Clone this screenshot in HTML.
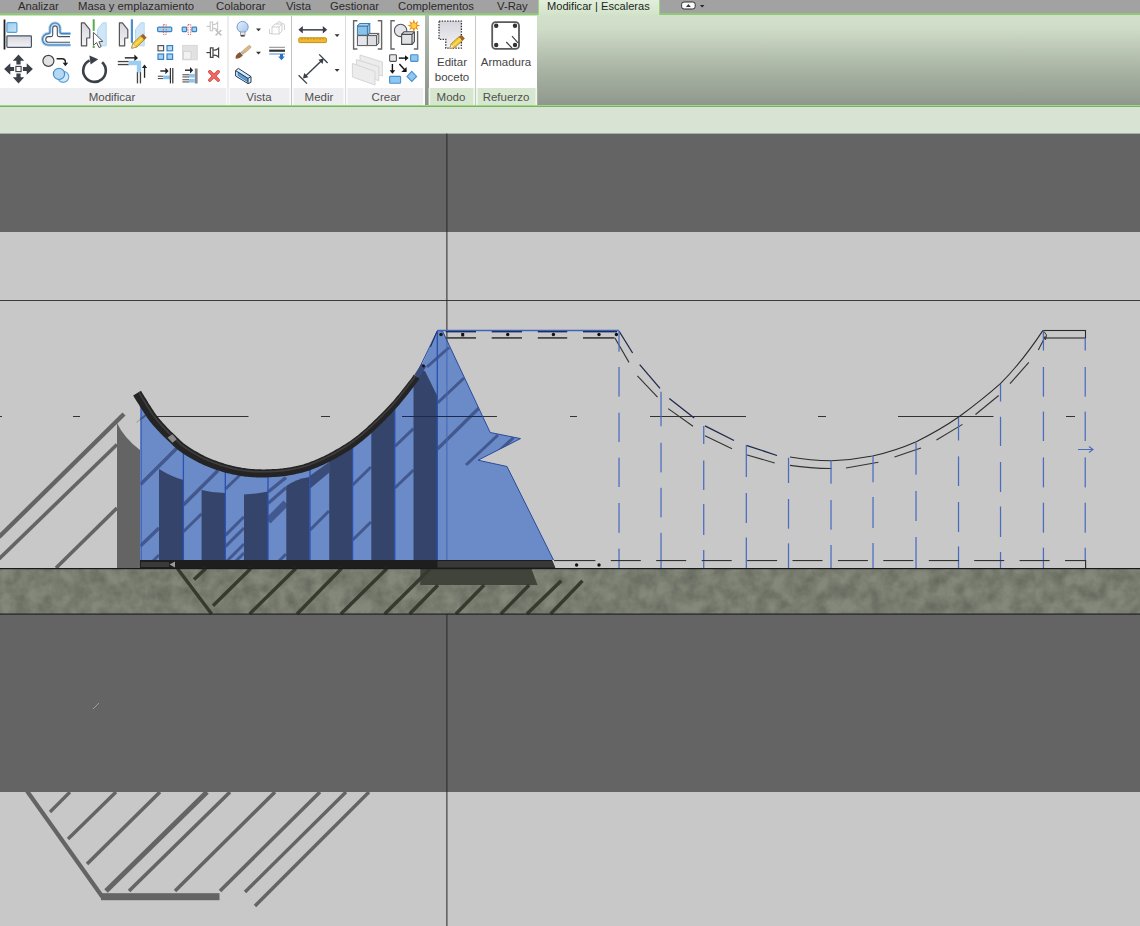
<!DOCTYPE html>
<html><head><meta charset="utf-8">
<style>
*{margin:0;padding:0;box-sizing:border-box}
html,body{width:1140px;height:926px;overflow:hidden;background:#c8c8c8;font-family:"Liberation Sans",sans-serif}
#tabs{position:absolute;left:0;top:0;width:1140px;height:15px;background:#a2a2a2;border-bottom:2px solid #8fc878}
#tabs span{position:absolute;top:-1.2px;font-size:11.3px;color:#2a2a2a;white-space:nowrap;line-height:14px}
#acttab{position:absolute;left:537.5px;top:0;width:122px;height:15px;background:#d5e4cd;border-left:1px solid #98d67c;border-right:1px solid #98d67c;background:linear-gradient(#e2eedc,#d3e3ca)}
#ribbon{position:absolute;left:0;top:15px;width:1140px;height:91px;background:linear-gradient(#d3e0cb 0,#cfdcc7 15%,#a9b4a4 60%,#8f978c 100%)}
#rwhite{position:absolute;left:0;top:0;width:425px;height:73px;background:#fff;border-top:1px solid #c9e4be}
#rlabel{position:absolute;left:0;top:73px;width:425px;height:17px;background:#eeeef0}
#rgreen{position:absolute;left:428.6px;top:0;width:108.6px;height:73px;background:#fff;border-top:1px solid #c9e4be}
#rsep{position:absolute;left:425px;top:0;width:3.6px;height:90px;background:linear-gradient(#b4bcb0,#8c928a)}
#rgreenl{position:absolute;left:428.6px;top:73px;width:108.6px;height:17px;background:#d6e6cf}
.plabel{position:absolute;top:75px;font-size:11.5px;color:#505050;text-align:center;line-height:14px}
.sep{position:absolute;top:0;width:1px;height:90px;background:#d0d0d0}
.btxt{position:absolute;font-size:11.5px;color:#454545;text-align:center;line-height:14.7px}
#rline{position:absolute;left:0;top:105px;width:1140px;height:2.4px;background:linear-gradient(#b2dc9e 0,#9ad082 40%,#74b65c 75%,#8cc476 100%)}
#opt{position:absolute;left:0;top:107px;width:1140px;height:27px;background:#d9e3d3}
#draw{position:absolute;left:0;top:133px;width:1140px;height:793px}
#icons{position:absolute;left:0;top:15px}
</style></head><body>
<div id="tabs">
<span style="left:18px">Analizar</span>
<span style="left:78px">Masa y emplazamiento</span>
<span style="left:216px">Colaborar</span>
<span style="left:286px">Vista</span>
<span style="left:330px">Gestionar</span>
<span style="left:398px">Complementos</span>
<span style="left:497px">V-Ray</span>
<div id="acttab"></div>
<span style="left:547px;color:#1c261c;font-size:11.1px">Modificar | Escaleras</span>
</div>
<div id="ribbon">
<div id="rwhite"></div><div id="rsep"></div><div id="rlabel"></div><div id="rgreen"></div><div id="rgreenl"></div>
<div class="plabel" style="left:62px;width:100px">Modificar</div>
<div class="plabel" style="left:229px;width:60px">Vista</div>
<div class="plabel" style="left:289px;width:60px">Medir</div>
<div class="plabel" style="left:346px;width:80px">Crear</div>
<div class="plabel" style="left:428px;width:46px">Modo</div>
<div class="plabel" style="left:476px;width:60px">Refuerzo</div>
<div class="btxt" style="left:430px;top:40px;width:44px">Editar<br>boceto</div>
<div class="btxt" style="left:476px;top:40px;width:60px">Armadura</div>
</div>
<div id="rline"></div>
<div id="opt"></div>
<svg id="icons" width="1140" height="107" viewBox="0 0 1140 107" style="position:absolute;left:0;top:0">
<defs>
<linearGradient id="gGray" x1="0" y1="0" x2="0" y2="1"><stop offset="0" stop-color="#d4d4dc"/><stop offset="1" stop-color="#f4f4f6"/></linearGradient>
<linearGradient id="gBlue" x1="0" y1="0" x2="1" y2="1"><stop offset="0" stop-color="#9ccdf0"/><stop offset="1" stop-color="#c4e4f8"/></linearGradient>
<linearGradient id="gBulb" x1="0" y1="0" x2="1" y2="1"><stop offset="0" stop-color="#e4f0fc"/><stop offset="1" stop-color="#a4c4ec"/></linearGradient>
</defs>
<!-- align -->
<rect x="3.6" y="19.5" width="1.8" height="30" fill="#222"/>
<rect x="6.9" y="22.7" width="10" height="9.6" rx="1" fill="url(#gBlue)" stroke="#5a9fd4" stroke-width="1.2"/>
<rect x="6.9" y="35.8" width="24.5" height="11.5" rx="0.8" fill="url(#gGray)" stroke="#4a5468" stroke-width="1.2"/>
<!-- offset -->
<path d="M70.5 33.6 H62 Q60 33.6 60 31.5 V28 A5 5 0 0 0 50 28 V31.5 Q50 33.6 48 33.6 H48.2 A5.7 5.7 0 0 0 48.2 45 H70.5" fill="none" stroke="#9ccbee" stroke-width="3"/>
<path d="M70.5 33.6 H62 Q60 33.6 60 31.5 V28 A5 5 0 0 0 50 28 V31.5 Q50 33.6 48 33.6 H48.2 A5.7 5.7 0 0 0 48.2 45 H70.5" fill="none" stroke="#4a7fb4" stroke-width="1.1"/>
<path d="M70 36.6 H59 Q57.3 36.6 57.3 35 V28.2 A2.3 2.3 0 0 0 52.7 28.2 V35 Q52.7 36.6 51 36.6 H48.6 A2.8 2.8 0 0 0 48.6 42.3 H70" fill="none" stroke="#4a4f58" stroke-width="1.1"/>
<!-- move -->
<g fill="#3a3f48">
<path d="M18.5 54.6 L24.2 60.8 H20.6 V64.6 H16.4 V60.8 H12.8 Z"/>
<path d="M18.5 83.4 L24.2 77.2 H20.6 V73.4 H16.4 V77.2 H12.8 Z"/>
<path d="M4.1 69 L10.3 63.3 V66.9 H14.1 V71.1 H10.3 V74.7 Z"/>
<path d="M32.9 69 L26.7 63.3 V66.9 H22.9 V71.1 H26.7 V74.7 Z"/>
</g>
<rect x="15.9" y="66.4" width="5.2" height="5.2" fill="#fff" stroke="#3a3f48" stroke-width="1.1"/>
<!-- copy -->
<circle cx="63.2" cy="76.8" r="5.6" fill="#cfe8fa" stroke="#62a6dc" stroke-width="1.1"/>
<circle cx="59" cy="73.9" r="5.6" fill="#b4d8f2" stroke="#4a8fca" stroke-width="1.2"/>
<circle cx="48.4" cy="60.9" r="5.5" fill="#e2e2e6" stroke="#454545" stroke-width="1.2"/>
<path d="M56.6 58.7 H62 Q65.4 58.7 65.4 62 V64" fill="none" stroke="#222" stroke-width="1.4"/>
<path d="M62.6 62.8 H68.2 L65.4 66.2 Z" fill="#222"/>
<!-- mirror pick -->
<path d="M81.4 22.8 H84.4 L89.8 29.6 V38 H86.7 V45.8 H81.4 Z" fill="url(#gGray)" stroke="#555" stroke-width="1.2" stroke-linejoin="round"/>
<path d="M106.2 22.8 H102.8 L97.5 29.6 V45.8 H106.2 Z" fill="#cfe6f8" stroke="#b4d6f0" stroke-width="1"/>
<rect x="92.7" y="19.3" width="2" height="11.5" fill="#5aaa50"/>
<rect x="92.7" y="46" width="2" height="2" fill="#5aaa50"/>
<path d="M93.4 32.3 V45.4 L96.6 42.6 L99 47.6 L101.2 46.6 L98.9 41.8 L102.9 41.4 Z" fill="#fff" stroke="#555" stroke-width="1" stroke-linejoin="round"/>
<!-- mirror draw -->
<path d="M119.4 22.8 H122.4 L127.8 29.6 V38 H124.7 V45.8 H119.4 Z" fill="url(#gGray)" stroke="#555" stroke-width="1.2" stroke-linejoin="round"/>
<path d="M144.2 22.8 H140.8 L135.5 29.6 V45.8 H144.2 Z" fill="#cfe6f8" stroke="#b4d6f0" stroke-width="1"/>
<rect x="130.8" y="19.3" width="2.2" height="23.5" fill="#4a90d0"/>
<g transform="translate(131.6,48.2) rotate(-43.5)">
<path d="M0 0 L4.4 -2.7 H15 V2.7 H4.4 Z" fill="#f2c62e" stroke="#a07818" stroke-width="0.7"/>
<path d="M0 0 L4.4 -2.7 V2.7 Z" fill="#f4e4c4" stroke="#a07818" stroke-width="0.5"/>
<rect x="15" y="-2.7" width="3.2" height="5.4" fill="#a0602a"/>
<rect x="4" y="-0.6" width="11" height="1.2" fill="#f8e070"/>
</g>
<!-- rotate -->
<path d="M102.1 62.2 A11.3 11.3 0 1 1 89.6 60.4" fill="none" stroke="#3a3f48" stroke-width="2.6"/>
<path d="M89.4 55.6 L98.2 59.2 L90.6 64.4 Z" fill="#3a3f48"/>
<!-- trim corner -->
<rect x="124.8" y="57.1" width="10.5" height="1.5" fill="#333"/>
<path d="M134.4 54.6 L138 57.9 L134.4 61.2 Z" fill="#222"/>
<rect x="117.8" y="60.9" width="11" height="1.3" fill="#444"/><rect x="117.8" y="63.9" width="11" height="1.3" fill="#444"/>
<path d="M128.6 60.8 H141.2 V72.4 H136.8 V65.2 H128.6 Z" fill="#9ccdf2"/>
<rect x="136.8" y="72.2" width="1.3" height="11.2" fill="#444"/><rect x="139.8" y="72.2" width="1.3" height="11.2" fill="#444"/>
<rect x="143.9" y="67" width="1.3" height="10.8" fill="#222"/>
<path d="M141.9 68 L144.5 64.4 L147.1 68 Z" fill="#222"/>
<!-- split -->
<rect x="157.6" y="27.2" width="14.2" height="4.4" rx="1" fill="#a4d2f2" stroke="#3a82c4" stroke-width="1.2"/>
<rect x="163.4" y="24.6" width="2.8" height="9.8" fill="none" stroke="#e05050" stroke-width="0.9" stroke-dasharray="1.4 1"/>
<rect x="182.2" y="27.2" width="4.4" height="4.4" rx="0.8" fill="#a4d2f2" stroke="#3a82c4" stroke-width="1.2"/>
<rect x="192" y="27.2" width="4.6" height="4.4" rx="0.8" fill="#a4d2f2" stroke="#3a82c4" stroke-width="1.2"/>
<rect x="188" y="24.6" width="2.8" height="9.8" fill="none" stroke="#e05050" stroke-width="0.9" stroke-dasharray="1.4 1"/>
<!-- unpin (gray) -->
<g fill="none" stroke="#c8c8c8" stroke-width="1.1">
<path d="M206.6 26.4 H210.2 M210.2 22 H212.6 V30.8 H210.2 Z M212.6 24 Q215 25.6 217.6 22.4 V30.4 Q215 27.4 212.6 28.8"/>
<path d="M215.6 30 L221.4 35.4 M221.4 30 L215.6 35.4" stroke="#c0c0c0" stroke-width="1.5"/>
</g>
<!-- array -->
<rect x="158" y="45.6" width="5.6" height="5.2" fill="#f4f4f4" stroke="#555" stroke-width="1.2"/>
<rect x="167" y="45.6" width="5.6" height="5.2" fill="#b4dcf6" stroke="#3a82c4" stroke-width="1.2"/>
<rect x="158" y="54" width="5.6" height="5.4" fill="#a4d2f2" stroke="#3a82c4" stroke-width="1.2"/>
<rect x="167" y="54" width="5.6" height="5.4" fill="#a4d2f2" stroke="#3a82c4" stroke-width="1.2"/>
<!-- scale (gray) -->
<rect x="182.6" y="45.4" width="14.6" height="14.4" fill="#e2e2e2" stroke="#d8d8d8" stroke-width="1"/>
<rect x="183.4" y="51.6" width="7.6" height="7.6" fill="#f2f2f2" stroke="#d0d0d0" stroke-width="0.8"/>
<!-- pin -->
<g fill="none" stroke="#444" stroke-width="1.2">
<path d="M206.4 52.6 H210.4"/>
<path d="M210.4 47.8 H213 V57.4 H210.4 Z"/>
<path d="M213 49.8 Q215.6 51 218.6 48.2 V57 Q215.6 54.2 213 55.4"/>
</g>
<!-- trim single -->
<rect x="160.3" y="70.3" width="6" height="1.4" fill="#222"/><path d="M165.4 67.8 L168.6 71 L165.4 74.2 Z" fill="#222"/>
<rect x="157.8" y="75.7" width="5.6" height="1.1" fill="#555"/><rect x="157.8" y="78" width="5.6" height="1.1" fill="#555"/>
<rect x="163.4" y="75.6" width="6.6" height="3.6" fill="#8cc4f0"/>
<rect x="169.8" y="68" width="1.2" height="15.4" fill="#333"/><rect x="172.2" y="68" width="1.2" height="15.4" fill="#333"/>
<!-- trim multiple -->
<rect x="185" y="69.5" width="6" height="1.4" fill="#222"/><path d="M190 67 L193.2 70.2 L190 73.4 Z" fill="#222"/>
<rect x="194.8" y="68.5" width="2.8" height="15" fill="#888"/>
<rect x="182.4" y="74.2" width="6.6" height="1.1" fill="#555"/><rect x="182.4" y="76.4" width="6.6" height="1.1" fill="#555"/>
<rect x="182.4" y="79.2" width="6.6" height="1.1" fill="#555"/><rect x="182.4" y="81.4" width="6.6" height="1.1" fill="#555"/>
<rect x="189" y="74" width="5.8" height="3.6" fill="#8cc4f0"/><rect x="189" y="79" width="5.8" height="3.6" fill="#8cc4f0"/>
<!-- delete -->
<path d="M209.8 71.7 L218.2 80.1 M218.2 71.7 L209.8 80.1" stroke="#c43c3c" stroke-width="3.4" stroke-linecap="round"/>
<path d="M209.8 71.7 L218.2 80.1 M218.2 71.7 L209.8 80.1" stroke="#f46a62" stroke-width="2.1" stroke-linecap="round"/>
<!-- separators -->
<rect x="227.5" y="16" width="1" height="89" fill="#dcdcdc"/>
<rect x="291" y="16" width="1" height="89" fill="#c4c4c4"/>
<rect x="345" y="16" width="1" height="89" fill="#dcdcdc"/>
<rect x="475" y="16" width="1" height="89" fill="#c4ccc0"/>
<g fill="#fbfbfb"><rect x="226" y="88" width="1.5" height="17"/><rect x="228.5" y="88" width="1.5" height="17"/><rect x="289.5" y="88" width="1.5" height="17"/><rect x="292" y="88" width="1.5" height="17"/><rect x="343.5" y="88" width="1.5" height="17"/><rect x="346" y="88" width="1.5" height="17"/><rect x="423" y="88" width="2" height="17"/></g><rect x="428.6" y="88" width="1.6" height="17" fill="#eef5ea"/><rect x="473.2" y="88" width="1.8" height="17" fill="#eef5ea"/><rect x="476" y="88" width="1.8" height="17" fill="#eef5ea"/><rect x="535.4" y="88" width="1.8" height="17" fill="#eef5ea"/>
<!-- Vista -->
<circle cx="242.6" cy="27" r="5.6" fill="url(#gBulb)" stroke="#7a9cd0" stroke-width="1"/>
<rect x="240.4" y="32" width="4.6" height="3.2" fill="#e8e8ec" stroke="#889" stroke-width="0.7"/>
<rect x="240.8" y="35" width="3.8" height="1.6" fill="#444"/>
<path d="M256 28.4 H261 L258.5 31.2 Z" fill="#333"/>
<g fill="none" stroke="#cfcfcf" stroke-width="1"><rect x="272" y="27" width="7" height="7"/><path d="M272 27 L275 24 H282 V31 L279 34 M279 27 L282 24 M269.5 29 V33.5 H272 M276 24 L279 21.5 L284.4 24.4 V30"/></g>
<g transform="translate(235.6,58.6) rotate(-40)">
<path d="M0 0 Q2 -3.4 7.6 -2.2 V2.2 Q3 3 0 0 Z" fill="#8a5630"/>
<rect x="7.6" y="-1.8" width="2.2" height="3.6" fill="#b0b4bc"/>
<rect x="9.8" y="-1.5" width="9.6" height="3" rx="1.2" fill="#dcb888" stroke="#b08850" stroke-width="0.5"/>
</g>
<path d="M256 51.8 H261 L258.5 54.6 Z" fill="#333"/>
<rect x="269.2" y="46.8" width="15.8" height="1" fill="#8a8a8a"/>
<rect x="269.2" y="49.6" width="15.8" height="2.2" fill="#333"/>
<rect x="269.2" y="53.4" width="15.8" height="1.2" fill="#6aa0dc" />
<path d="M280 54 H283 V56.6 H284.8 L281.5 60.2 L278.2 56.6 H280 Z" fill="#2a72c4"/>
<g stroke="#2c3a4c" stroke-width="1" stroke-linejoin="round"><path d="M235.6 70.6 L238.4 68.4 L251 76.6 V82.4 L248 83.6 L235.6 76 Z" fill="#d4ecfc"/><path d="M238.2 72.4 L247.6 78.4 V81.6 L238.2 75.6 Z" fill="#58a4e4" stroke="#2a6cb0" stroke-width="0.8"/><path d="M235.6 70.6 L248 78.4 V83.6 M248 78.4 L251 76.6" fill="none"/></g>
<!-- Medir -->
<rect x="301" y="29.1" width="24" height="1.5" fill="#3a3f48"/>
<path d="M298.4 29.8 L302.8 26 V33.6 Z M327.2 29.8 L322.8 26 V33.6 Z" fill="#3a3f48"/>
<rect x="298.8" y="37.8" width="27.6" height="4.8" rx="0.8" fill="#f2b92e" stroke="#c48e1c" stroke-width="1"/>
<path d="M302 38 V40 M305 38 V39.4 M308 38 V40 M311 38 V39.4 M314 38 V40 M317 38 V39.4 M320 38 V40 M323 38 V39.4" stroke="#b07c10" stroke-width="0.7"/>
<path d="M334.6 34.2 H339.6 L337.1 37 Z" fill="#333"/>
<path d="M304 77.6 L322.8 59.4" stroke="#3a3f48" stroke-width="1.4"/>
<path d="M298.6 75.2 L307 83.6 M319.2 54.4 L327.6 63" stroke="#3a3f48" stroke-width="1.3"/>
<path d="M323.6 58.6 L322.6 64 L318.4 59.8 Z M303 78.4 L304.2 73 L308.4 77.2 Z" fill="#3a3f48"/>
<path d="M334.6 69 H339.6 L337.1 71.8 Z" fill="#333"/>
<!-- Crear: [cubes] -->
<g fill="none" stroke="#666" stroke-width="1.4"><path d="M357.4 20.8 H353.6 V49 H357.4"/><path d="M377.8 20.8 H381.6 V49 H377.8"/><path d="M394.8 20.8 H391 V49 H394.8"/><path d="M413.8 49 H417.6 V31"/></g>
<g stroke-linejoin="round" stroke-width="1">
<path d="M357.4 26 L359.6 23.6 H369.8 V32.6 L367.4 35.2 H357.4 Z" fill="#8cc2e8" stroke="#3a78b0"/>
<path d="M357.4 26 H367.4 L369.8 23.6 M367.4 26 V35.2" fill="none" stroke="#3a78b0"/>
<path d="M357.4 26 L359.6 23.6 H369.8 L367.4 26 Z" fill="#b8dcf4" stroke="#3a78b0"/>
<path d="M357.4 35.6 H367.4 V45.6 H357.4 Z" fill="#e4e6ea" stroke="#555"/>
<path d="M367.4 35.6 L369.6 33.4 H378.8 V43 L376.6 45.6 H367.4 Z" fill="#dcdee2" stroke="#555"/>
<path d="M367.4 35.6 H376.6 L378.8 33.4 M376.6 35.6 V45.6" fill="none" stroke="#555"/>
</g>
<!-- [circle cube star] -->
<circle cx="400.6" cy="30.4" r="6.2" fill="#e4e4ec" stroke="#555" stroke-width="1.1"/>
<g stroke-linejoin="round" stroke="#4a4a4a" stroke-width="1.1">
<path d="M401.6 34.4 L404 31.8 H414.4 V41.6 L412 44.4 H401.6 Z" fill="#e0e2e6"/>
<path d="M401.6 34.4 H412 L414.4 31.8 M412 34.4 V44.4" fill="none"/>
</g>
<g transform="translate(413.8,25.6)">
<path d="M0 -6.4 L1.4 -2.6 L4.6 -4.6 L3 -1.2 L6.6 0 L3 1.2 L4.6 4.6 L1.4 2.6 L0 6.4 L-1.4 2.6 L-4.6 4.6 L-3 1.2 L-6.6 0 L-3 -1.2 L-4.6 -4.6 L-1.4 -2.6 Z" fill="#ee8c1c"/>
<circle r="2.6" fill="#fcd040"/>
</g>
<!-- gray panels -->
<g fill="#ececec" stroke="#d6d6d6" stroke-width="1" stroke-linejoin="round">
<path d="M360 55 L382.4 62 V76 L360 69 Z"/>
<path d="M356.4 59.6 L378.8 66.6 V80.6 L356.4 73.6 Z"/>
<path d="M352.4 63.4 L375 71.4 V85 L352.4 77 Z"/>
</g>
<!-- flow -->
<rect x="389.6" y="54.8" width="6.8" height="6.6" rx="0.8" fill="#e2e4ea" stroke="#555" stroke-width="1.1"/>
<rect x="410.6" y="54.8" width="7.4" height="6.6" rx="0.8" fill="#8cc8f0" stroke="#4a90cc" stroke-width="1.1"/>
<rect x="398.8" y="57.4" width="7" height="1.4" fill="#111"/><path d="M405 55.2 L408.6 58.1 L405 61 Z" fill="#111"/>
<rect x="391.7" y="64" width="1.4" height="7" fill="#111"/><path d="M389.6 70.2 L392.4 73.8 L395.2 70.2 Z" fill="#111"/>
<path d="M399.4 64 L404.4 69.4" stroke="#111" stroke-width="1.4"/><path d="M406.6 67 V72 H401.4 Z" fill="#111"/>
<rect x="389.6" y="76.4" width="11" height="6.8" rx="0.8" fill="#8cc8f0" stroke="#4a90cc" stroke-width="1.1"/>
<path d="M411.8 71.4 L416.6 76.4 L411.8 81.4 L407 76.4 Z" fill="#8cc8f0" stroke="#4a90cc" stroke-width="1.1"/>
<!-- Edit sketch -->
<path d="M439 21.2 H461.4 V48.2 H445.8 V39.4 H439 Z" fill="url(#gGray)" stroke="#333" stroke-width="1.3" stroke-dasharray="1.4 1.3"/>
<g transform="translate(449.8,48.4) rotate(-41.5)">
<path d="M0 0 L4.4 -2.6 H14.6 V2.6 H4.4 Z" fill="#f2c62e" stroke="#a07818" stroke-width="0.7"/>
<path d="M0 0 L4.4 -2.6 V2.6 Z" fill="#f8ecd4" stroke="#a07818" stroke-width="0.5"/>
<rect x="14.6" y="-2.6" width="3.2" height="5.2" fill="#a0602a"/>
<rect x="4" y="-0.6" width="10.6" height="1.2" fill="#f8e070"/>
</g>
<!-- Armadura -->
<rect x="492.2" y="22.2" width="26.8" height="26.6" rx="3.4" fill="#fff" stroke="#5a5a5a" stroke-width="1.8"/>
<circle cx="496.2" cy="25.8" r="2.2" fill="#333"/><circle cx="515" cy="25.8" r="2.2" fill="#333"/><circle cx="496.2" cy="45" r="2.2" fill="#333"/><circle cx="515" cy="45" r="2.2" fill="#333"/>
<path d="M512 36.2 L518 42.8 M506.2 42 L512 48" stroke="#444" stroke-width="1.2"/>
<!-- minimise widget -->
<rect x="681.6" y="2" width="13.6" height="7" rx="2.4" fill="#fafafa" stroke="#333" stroke-width="1"/>
<path d="M686 7 L688.4 4 L690.8 7 Z" fill="#333"/>
<path d="M700 5 H704.4 L702.2 7.6 Z" fill="#222"/>
</svg>

<svg id="draw" width="1140" height="793" viewBox="0 133 1140 793">
<rect x="0" y="133.6" width="1140" height="98.4" fill="#646464"/>
<rect x="0" y="232" width="1140" height="337" fill="#c8c8c8"/>
<rect x="0" y="614" width="1140" height="178" fill="#646464"/>
<rect x="0" y="792" width="1140" height="134" fill="#c8c8c8"/>
<rect x="0" y="300" width="1140" height="1" fill="#3a3a3a"/>
<rect x="446.4" y="133.6" width="1" height="793" fill="#262626"/>
<path d="M117 568 L117 423 Q124 438 140 450 L140 568 Z" fill="#646464"/>
<g stroke="#646464" stroke-linecap="butt" fill="none"><path d="M-2 637 L123 414" transform="" stroke-width="0"/>
<line x1="-1" y1="537" x2="124" y2="414" stroke-width="4.4"/><line x1="-1" y1="559" x2="117" y2="444.5" stroke-width="3.6"/><line x1="56" y1="568" x2="117" y2="508" stroke-width="3.6"/></g>
<rect x="0" y="416" width="2" height="1" fill="#333"/>
<rect x="73" y="416" width="7" height="1" fill="#333"/>
<rect x="152" y="416" width="96.5" height="1" fill="#333"/>
<rect x="321" y="416" width="9" height="1" fill="#333"/>
<rect x="402" y="416" width="95" height="1" fill="#333"/>
<rect x="570" y="416" width="7" height="1" fill="#333"/>
<rect x="650" y="416" width="96" height="1" fill="#333"/>
<rect x="818" y="416" width="8" height="1" fill="#333"/>
<rect x="898" y="416" width="95.5" height="1" fill="#333"/>
<rect x="1066" y="416" width="9" height="1" fill="#333"/>
<defs><clipPath id="bclip"><path d="M140.4 402 C142.3 404.4 148.0 411.8 151.8 416.4 C155.6 421.0 159.6 425.8 163 429.5 C166.4 433.2 169.0 435.6 172.4 438.8 C175.8 442.0 178.3 445.0 183.4 448.5 C188.5 452.0 196.1 456.7 203 460 C209.9 463.3 218.0 466.1 225 468.2 C232.0 470.3 238.8 471.5 245 472.4 C251.2 473.3 256.2 473.4 262 473.4 C267.8 473.4 274.5 473.1 280 472.6 C285.5 472.1 290.1 471.4 295 470.3 C299.9 469.2 303.8 468.4 309.5 466.3 C315.2 464.2 322.4 461.2 329.5 457.5 C336.6 453.8 345.4 448.7 352.3 443.9 C359.2 439.1 364.0 434.9 371 428.5 C378.0 422.1 387.2 413.0 394.2 405.2 C401.2 397.4 409.5 386.3 413.2 381.5 C416.9 376.7 415.9 377.3 416.5 376.5 L437.5 330.5 L442.5 331 L490.2 432.5 L520.5 438.6 L478 460.2 L507 466.5 L553.5 560 L140.4 560 Z"/></clipPath></defs>
<path d="M140.4 402 C142.3 404.4 148.0 411.8 151.8 416.4 C155.6 421.0 159.6 425.8 163 429.5 C166.4 433.2 169.0 435.6 172.4 438.8 C175.8 442.0 178.3 445.0 183.4 448.5 C188.5 452.0 196.1 456.7 203 460 C209.9 463.3 218.0 466.1 225 468.2 C232.0 470.3 238.8 471.5 245 472.4 C251.2 473.3 256.2 473.4 262 473.4 C267.8 473.4 274.5 473.1 280 472.6 C285.5 472.1 290.1 471.4 295 470.3 C299.9 469.2 303.8 468.4 309.5 466.3 C315.2 464.2 322.4 461.2 329.5 457.5 C336.6 453.8 345.4 448.7 352.3 443.9 C359.2 439.1 364.0 434.9 371 428.5 C378.0 422.1 387.2 413.0 394.2 405.2 C401.2 397.4 409.5 386.3 413.2 381.5 C416.9 376.7 415.9 377.3 416.5 376.5 L437.5 330.5 L442.5 331 L490.2 432.5 L520.5 438.6 L478 460.2 L507 466.5 L553.5 560 L140.4 560 Z" fill="#6a8bc8"/>
<g clip-path="url(#bclip)">
<line x1="140.4" y1="484.5" x2="177.5" y2="447.5" stroke="#42588e" stroke-width="3.5"/>
<line x1="140.4" y1="546" x2="159" y2="528" stroke="#42588e" stroke-width="3.5"/>
<line x1="153" y1="561" x2="159" y2="555" stroke="#42588e" stroke-width="3"/>
<line x1="183.4" y1="505" x2="218" y2="470.6" stroke="#42588e" stroke-width="3.5"/>
<line x1="183.4" y1="531.7" x2="201.6" y2="513.8" stroke="#42588e" stroke-width="3"/>
<line x1="225.4" y1="489" x2="240" y2="475" stroke="#42588e" stroke-width="3"/>
<line x1="225.4" y1="535.4" x2="244" y2="516.8" stroke="#42588e" stroke-width="3"/>
<line x1="225.4" y1="546.6" x2="244" y2="528" stroke="#42588e" stroke-width="3"/>
<line x1="227" y1="561" x2="244" y2="544" stroke="#42588e" stroke-width="3"/>
<line x1="236" y1="561" x2="244" y2="553" stroke="#42588e" stroke-width="3"/>
<line x1="268" y1="492" x2="286" y2="477.5" stroke="#42588e" stroke-width="3.5"/>
<line x1="268" y1="503.5" x2="286.3" y2="487.5" stroke="#42588e" stroke-width="3"/>
<line x1="268" y1="521" x2="286" y2="503" stroke="#42588e" stroke-width="7"/>
<line x1="279" y1="561" x2="286" y2="554" stroke="#42588e" stroke-width="3"/>
<line x1="310" y1="530" x2="329" y2="511" stroke="#42588e" stroke-width="3"/>
<line x1="352.6" y1="485" x2="371" y2="467" stroke="#42588e" stroke-width="3"/>
<line x1="352.6" y1="540" x2="371" y2="522" stroke="#42588e" stroke-width="3"/>
<line x1="394.8" y1="446.5" x2="413.5" y2="428.6" stroke="#42588e" stroke-width="3"/>
<line x1="394.8" y1="488" x2="413.5" y2="470" stroke="#42588e" stroke-width="3"/>
<line x1="427" y1="367" x2="449" y2="347.5" stroke="#42588e" stroke-width="3"/>
<line x1="437.5" y1="403" x2="464" y2="378" stroke="#42588e" stroke-width="3"/>
<line x1="437.5" y1="449" x2="479" y2="408" stroke="#42588e" stroke-width="3.2"/>
<line x1="466" y1="465" x2="498" y2="435" stroke="#42588e" stroke-width="3"/>
<line x1="488" y1="461" x2="513.5" y2="437.7" stroke="#42588e" stroke-width="3"/>
<path d="M159 560 L159 469 Q172 477 183.4 480 L183.4 560 Z" fill="#35446a"/>
<path d="M201.6 560 L201.6 490 Q213 493 225 493 L225 560 Z" fill="#35446a"/>
<path d="M244 560 L244 494.4 Q256 494 268 491.4 L268 560 Z" fill="#35446a"/>
<path d="M286.3 560 L286.3 486 Q296 479 309.6 477 L309.6 560 Z" fill="#35446a"/>
<path d="M309.6 476 L329.3 462 L329.3 472.5 L309.6 489 Z" fill="#3c4c78"/>
<rect x="329.2" y="380" width="23.4" height="180" fill="#35446a"/>
<rect x="371.3" y="380" width="23.5" height="180" fill="#35446a"/>
<path d="M413.5 560 L413.5 370 L425 371 L437.3 396 L437.3 560 Z" fill="#35446a"/>
<line x1="140.9" y1="330" x2="140.9" y2="560" stroke="#2a50b0" stroke-width="1.3"/>
<line x1="183.4" y1="330" x2="183.4" y2="560" stroke="#2a50b0" stroke-width="1.3"/>
<line x1="225.3" y1="330" x2="225.3" y2="560" stroke="#2a50b0" stroke-width="1.3"/>
<line x1="268" y1="330" x2="268" y2="560" stroke="#2a50b0" stroke-width="1.3"/>
<line x1="310" y1="330" x2="310" y2="560" stroke="#2a50b0" stroke-width="1.3"/>
<line x1="352.6" y1="330" x2="352.6" y2="560" stroke="#2a50b0" stroke-width="1.3"/>
<line x1="394.8" y1="330" x2="394.8" y2="560" stroke="#2a50b0" stroke-width="1.3"/>
<line x1="437.3" y1="330" x2="437.3" y2="560" stroke="#2a50b0" stroke-width="1.3"/>
<line x1="446.9" y1="330" x2="446.9" y2="560" stroke="#4466b0" stroke-width="1"/>
<rect x="402" y="416" width="95" height="1" fill="#1c2a50"/>
</g>
<path d="M416 375 L437.5 330.5 L442.5 331 L490.2 432.5 L520.5 438.6 L478 460.2 L507 466.5 L553.5 560" fill="none" stroke="#2c4a9c" stroke-width="1"/>
<line x1="136.6" y1="422.4" x2="140.4" y2="419.4" stroke="#8a8a94" stroke-width="0.9"/><line x1="140.4" y1="419.4" x2="146" y2="415" stroke="#42588e" stroke-width="2"/>
<polygon points="133.2,395.6 133.9,396.8 134.8,398.2 135.9,400.0 137.1,402.0 138.5,404.1 139.9,406.4 141.3,408.7 142.8,411.0 144.2,413.2 145.6,415.3 146.9,417.3 148.1,419.0 149.2,420.6 150.3,422.0 151.4,423.3 152.4,424.5 153.4,425.7 154.4,426.8 155.3,427.8 156.2,428.8 157.1,429.8 158.0,430.7 158.9,431.6 159.7,432.5 160.6,433.4 161.4,434.3 162.3,435.2 163.1,436.0 163.8,436.8 164.6,437.5 165.4,438.3 166.2,439.0 167.0,439.7 167.8,440.5 168.6,441.2 169.4,442.0 170.2,442.8 171.0,443.5 171.8,444.3 172.6,445.1 173.4,445.9 174.3,446.7 175.2,447.5 176.2,448.4 177.3,449.3 178.4,450.2 179.6,451.1 180.9,452.0 182.3,453.0 183.8,453.9 185.3,454.9 186.9,456.0 188.6,457.0 190.3,458.0 192.1,459.1 193.9,460.1 195.7,461.1 197.5,462.0 199.4,463.0 201.2,463.8 203.0,464.7 204.9,465.5 206.8,466.3 208.7,467.1 210.6,467.8 212.5,468.5 214.4,469.2 216.4,469.9 218.3,470.5 220.2,471.1 222.0,471.7 223.8,472.2 225.6,472.7 227.4,473.2 229.2,473.6 231.0,474.1 232.7,474.4 234.5,474.8 236.2,475.1 237.9,475.4 239.6,475.7 241.2,476.0 242.8,476.2 244.4,476.5 246.0,476.7 247.6,476.8 249.1,477.0 250.5,477.1 252.0,477.2 253.4,477.3 254.8,477.3 256.3,477.4 257.7,477.4 259.1,477.4 260.5,477.4 262.0,477.4 263.5,477.4 265.0,477.4 266.6,477.4 268.2,477.3 269.7,477.3 271.3,477.2 272.9,477.1 274.4,477.0 276.0,476.9 277.5,476.8 278.9,476.7 280.4,476.5 281.8,476.4 283.1,476.3 284.5,476.1 285.8,475.9 287.0,475.7 288.3,475.5 289.6,475.3 290.8,475.1 292.1,474.9 293.3,474.6 294.6,474.4 295.8,474.1 297.0,473.8 298.2,473.6 299.4,473.3 300.6,473.0 301.7,472.7 302.9,472.4 304.1,472.1 305.4,471.7 306.7,471.3 308.0,470.9 309.4,470.4 310.8,469.9 312.3,469.3 313.9,468.7 315.5,468.1 317.1,467.4 318.8,466.7 320.5,466.0 322.2,465.2 324.0,464.4 325.8,463.6 327.6,462.7 329.4,461.8 331.2,460.8 333.1,459.8 335.0,458.8 336.9,457.7 338.9,456.6 340.9,455.5 342.9,454.3 344.9,453.1 346.9,451.9 348.8,450.7 350.7,449.4 352.6,448.2 354.4,446.9 356.1,445.7 357.8,444.5 359.4,443.3 360.9,442.1 362.4,440.9 364.0,439.6 365.5,438.3 367.0,437.0 368.5,435.7 370.1,434.2 371.7,432.7 373.5,431.2 375.3,429.5 377.1,427.7 379.1,425.8 381.1,423.9 383.1,421.9 385.1,419.9 387.1,417.8 389.2,415.8 391.2,413.7 393.1,411.6 395.0,409.6 396.8,407.6 398.7,405.5 400.5,403.3 402.3,401.1 404.2,398.8 406.0,396.6 407.7,394.4 409.4,392.2 411.0,390.2 412.4,388.2 413.8,386.5 414.9,384.9 415.9,383.6 416.8,382.5 417.5,381.6 418.0,380.8 418.5,380.2 418.8,379.6 419.1,379.1 419.3,378.7 419.4,378.3 419.5,378.1 419.5,378.1 419.4,378.3 419.4,378.3 413.6,374.7 413.4,375.1 413.2,375.5 413.0,375.8 413.0,375.9 413.0,375.9 413.0,375.9 412.9,376.1 412.7,376.4 412.4,376.8 411.9,377.5 411.3,378.3 410.5,379.4 409.4,380.7 408.2,382.3 406.9,384.0 405.4,385.9 403.8,387.9 402.2,390.0 400.5,392.2 398.7,394.4 396.9,396.6 395.1,398.8 393.3,400.9 391.6,402.8 389.8,404.8 387.9,406.8 386.0,408.8 384.1,410.8 382.1,412.8 380.1,414.8 378.0,416.8 376.1,418.8 374.1,420.6 372.2,422.5 370.3,424.2 368.5,425.8 366.9,427.4 365.2,428.9 363.7,430.2 362.2,431.5 360.7,432.8 359.3,434.0 357.9,435.2 356.4,436.3 354.9,437.4 353.4,438.6 351.8,439.7 350.2,440.9 348.5,442.1 346.7,443.2 344.8,444.4 342.9,445.6 341.0,446.8 339.1,447.9 337.1,449.0 335.2,450.1 333.3,451.2 331.4,452.2 329.5,453.2 327.8,454.2 326.0,455.1 324.3,455.9 322.6,456.7 320.8,457.5 319.2,458.3 317.5,459.0 315.8,459.7 314.2,460.4 312.6,461.0 311.1,461.6 309.6,462.2 308.2,462.7 306.8,463.2 305.6,463.6 304.3,464.0 303.2,464.4 302.1,464.7 301.0,465.0 299.9,465.2 298.8,465.5 297.7,465.8 296.6,466.0 295.4,466.2 294.2,466.5 293.0,466.7 291.8,467.0 290.6,467.2 289.5,467.4 288.3,467.6 287.1,467.8 285.9,467.9 284.7,468.1 283.5,468.3 282.2,468.4 280.9,468.5 279.6,468.7 278.3,468.8 276.9,468.9 275.4,469.0 273.9,469.1 272.5,469.1 270.9,469.2 269.4,469.3 267.9,469.3 266.4,469.3 264.9,469.4 263.5,469.4 262.0,469.4 260.6,469.3 259.2,469.3 257.8,469.3 256.5,469.3 255.2,469.2 253.8,469.1 252.5,469.1 251.2,469.0 249.8,468.8 248.4,468.7 247.0,468.5 245.6,468.3 244.1,468.1 242.5,467.9 240.9,467.6 239.4,467.3 237.8,467.0 236.1,466.7 234.5,466.3 232.9,466.0 231.2,465.6 229.5,465.1 227.9,464.7 226.2,464.2 224.5,463.7 222.7,463.1 220.9,462.5 219.1,461.9 217.3,461.3 215.4,460.6 213.6,459.9 211.8,459.2 210.0,458.5 208.2,457.7 206.5,456.9 204.8,456.2 203.2,455.3 201.5,454.5 199.8,453.6 198.1,452.6 196.4,451.6 194.7,450.7 193.1,449.7 191.5,448.7 190.0,447.7 188.5,446.8 187.1,445.8 185.9,445.0 184.7,444.1 183.7,443.4 182.8,442.6 181.9,441.8 181.0,441.1 180.2,440.3 179.5,439.6 178.7,438.8 177.9,438.0 177.1,437.2 176.3,436.4 175.4,435.6 174.6,434.8 173.8,434.1 173.0,433.3 172.3,432.6 171.5,431.9 170.8,431.2 170.1,430.5 169.4,429.7 168.6,429.0 167.9,428.2 167.1,427.4 166.3,426.5 165.4,425.5 164.5,424.6 163.7,423.7 162.8,422.7 162.0,421.8 161.1,420.8 160.2,419.8 159.3,418.8 158.4,417.6 157.5,416.4 156.5,415.2 155.5,413.8 154.4,412.2 153.2,410.3 151.8,408.3 150.5,406.1 149.0,403.9 147.6,401.6 146.3,399.3 144.9,397.2 143.7,395.2 142.6,393.4 141.7,391.9 141.0,390.8" fill="#242424"/>
<polyline points="138.7,392.2 139.4,393.4 140.3,394.9 141.4,396.6 142.6,398.6 143.9,400.8 145.3,403.0 146.7,405.3 148.2,407.6 149.6,409.8 150.9,411.8 152.2,413.7 153.3,415.4 154.3,416.8 155.3,418.1 156.3,419.3 157.2,420.5 158.2,421.6 159.1,422.6 160.0,423.6 160.8,424.6 161.7,425.5 162.6,426.4 163.4,427.4 164.3,428.3 165.1,429.2 165.9,430.0 166.7,430.8 167.5,431.6 168.2,432.4 168.9,433.1 169.7,433.8 170.4,434.5 171.2,435.3 172.0,436.0 172.8,436.7 173.6,437.5 174.4,438.3 175.3,439.1 176.1,439.9 176.9,440.7 177.6,441.5 178.5,442.2 179.3,443.0 180.2,443.8 181.1,444.6 182.1,445.4 183.2,446.2 184.4,447.1 185.7,448.0 187.1,448.9 188.6,449.9 190.1,450.9 191.7,451.9 193.4,452.9 195.1,453.9 196.8,454.9 198.5,455.8 200.3,456.7 202.0,457.6 203.7,458.5 205.5,459.3 207.2,460.0 209.0,460.8 210.9,461.6 212.7,462.3 214.6,463.0 216.4,463.6 218.3,464.3 220.1,464.9 221.9,465.5 223.7,466.1 225.5,466.6 227.2,467.1 228.9,467.6 230.6,468.0 232.3,468.4 234.0,468.8 235.6,469.1 237.3,469.5 238.9,469.8 240.5,470.0 242.1,470.3 243.7,470.5 245.2,470.8 246.7,471.0 248.2,471.1 249.6,471.3 251.0,471.4 252.3,471.5 253.7,471.6 255.1,471.6 256.4,471.7 257.8,471.7 259.2,471.8 260.6,471.8 262.0,471.8 263.5,471.8 265.0,471.8 266.5,471.8 268.0,471.7 269.5,471.7 271.1,471.6 272.6,471.5 274.1,471.5 275.6,471.4 277.0,471.3 278.5,471.1 279.9,471.0 281.2,470.9 282.5,470.8 283.8,470.6 285.0,470.4 286.3,470.3 287.5,470.1 288.7,469.9 289.9,469.7 291.1,469.5 292.3,469.3 293.5,469.0 294.7,468.8 295.9,468.5 297.0,468.3 298.2,468.0 299.3,467.8 300.4,467.5 301.5,467.2 302.7,466.9 303.8,466.6 305.0,466.2 306.3,465.8 307.6,465.4 309.0,464.9 310.4,464.3 311.9,463.7 313.5,463.1 315.1,462.5 316.7,461.8 318.4,461.1 320.1,460.4 321.8,459.6 323.5,458.8 325.3,457.9 327.0,457.1 328.8,456.2 330.6,455.2 332.5,454.2 334.4,453.2 336.3,452.1 338.3,451.0 340.2,449.8 342.2,448.7 344.1,447.5 346.0,446.3 347.9,445.1 349.7,443.9 351.5,442.7 353.1,441.5 354.7,440.3 356.3,439.2 357.8,438.0 359.2,436.9 360.7,435.7 362.2,434.5 363.6,433.2 365.1,431.9 366.7,430.5 368.3,429.0 370.0,427.4 371.8,425.8 373.7,424.0 375.6,422.2 377.6,420.3 379.6,418.4 381.6,416.4 383.6,414.3 385.6,412.3 387.6,410.3 389.5,408.2 391.4,406.2 393.1,404.3 394.9,402.3 396.7,400.1 398.5,398.0 400.3,395.8 402.1,393.5 403.8,391.3 405.5,389.2 407.1,387.2 408.5,385.3 409.9,383.5 411.1,382.0 412.1,380.7 412.9,379.6 413.6,378.7 414.1,378.0 414.4,377.5 414.7,377.1 414.8,376.9 414.9,376.7 414.9,376.6 415.0,376.5 415.1,376.3 415.2,376.0 415.3,375.8" fill="none" stroke="#3e3e3e" stroke-width="1.6"/>
<path d="M416.5 376.5 L424 365" stroke="#3a4c7c" stroke-width="5.5" fill="none"/>
<circle cx="423.5" cy="366" r="1.4" fill="#151515"/>
<path d="M167.5 437.5 l5 -3.2 l4.2 5 l-4.2 3.4 z" fill="#8a8a8a"/>
<path d="M140 560 L552 560 L555.5 568.5 L140 568.5 Z" fill="#1e1e1e"/>
<path d="M437.5 561 L552.4 561 L555 567.6 L437.5 567.6 Z" fill="#383838"/>
<rect x="141" y="562" width="28" height="5" fill="#3a3a3a"/>
<path d="M169.5 564.5 L175 561.5 L175 567.5 Z" fill="#9a9a9a"/>
<line x1="437.5" y1="330.5" x2="619" y2="330.5" stroke="#3c64c0" stroke-width="1.6"/>
<rect x="445.7" y="331" width="30.30000000000001" height="1.4" fill="#1e2c58"/>
<rect x="445.7" y="337" width="30.30000000000001" height="1.8" fill="#4a4a4a"/>
<rect x="491.7" y="331" width="30.30000000000001" height="1.4" fill="#1e2c58"/>
<rect x="491.7" y="337" width="30.30000000000001" height="1.8" fill="#4a4a4a"/>
<rect x="537.8" y="331" width="29.40000000000009" height="1.4" fill="#1e2c58"/>
<rect x="537.8" y="337" width="29.40000000000009" height="1.8" fill="#4a4a4a"/>
<rect x="583" y="331" width="34" height="1.4" fill="#1e2c58"/>
<rect x="583" y="337" width="31.5" height="1.8" fill="#4a4a4a"/>
<rect x="461.2" y="333" width="3" height="3.4" fill="#111"/>
<circle cx="507.7" cy="334.5" r="1.7" fill="#111"/>
<circle cx="553.4" cy="334.5" r="1.7" fill="#111"/>
<circle cx="599" cy="334.5" r="1.7" fill="#111"/>
<circle cx="616.4" cy="334.5" r="1.7" fill="#111"/>
<circle cx="441" cy="334.5" r="1.8" fill="#1a1a1a"/><line x1="437" y1="331.5" x2="430.5" y2="347" stroke="#1c2c5c" stroke-width="1"/>
<line x1="619" y1="331" x2="632.6" y2="353" stroke="#1e2a4a" stroke-width="1.3"/>
<line x1="639.7" y1="364.7" x2="660" y2="388.4" stroke="#1e2a4a" stroke-width="1.3"/>
<line x1="669.3" y1="398.4" x2="694.2" y2="418" stroke="#1e2a4a" stroke-width="1.3"/>
<line x1="705" y1="425.8" x2="734" y2="440.5" stroke="#1e2a4a" stroke-width="1.3"/>
<line x1="746.3" y1="445.3" x2="777" y2="455.5" stroke="#1e2a4a" stroke-width="1.3"/>
<line x1="614.9" y1="338" x2="629" y2="362.4" stroke="#333" stroke-width="1.1"/>
<line x1="637.4" y1="375.9" x2="657.5" y2="397.2" stroke="#333" stroke-width="1.1"/>
<line x1="668.2" y1="408.6" x2="693" y2="426.3" stroke="#333" stroke-width="1.1"/>
<line x1="705" y1="435.8" x2="732" y2="448.8" stroke="#333" stroke-width="1.1"/>
<line x1="746.3" y1="454.7" x2="774.7" y2="463" stroke="#333" stroke-width="1.1"/>
<path d="M790 457 Q810 460.5 831.6 460.7 Q852 460 872.5 456 Q895 451 916.3 441.7 Q940 430 959 416.8 Q982 400 1000.4 383.7 Q1022 362 1043 330.4" fill="none" stroke="#2a2a2a" stroke-width="1.1"/>
<path d="M790 465.4 Q810 468.5 831.6 468.5" fill="none" stroke="#333" stroke-width="1.1"/>
<line x1="846" y1="468" x2="878.4" y2="462.3" stroke="#333" stroke-width="1.1"/>
<line x1="894.5" y1="457" x2="921" y2="448" stroke="#333" stroke-width="1.1"/>
<line x1="936.5" y1="440" x2="962.5" y2="424.4" stroke="#333" stroke-width="1.1"/>
<line x1="975.5" y1="414.5" x2="998.7" y2="395.5" stroke="#333" stroke-width="1.1"/>
<line x1="1010" y1="383.7" x2="1028.8" y2="362.4" stroke="#333" stroke-width="1.1"/>
<line x1="1038.3" y1="350" x2="1045.4" y2="336.3" stroke="#333" stroke-width="1.1"/>
<rect x="1043.5" y="330.5" width="42" height="7.5" fill="none" stroke="#2a2a2a" stroke-width="1.1"/>
<path d="M1044 331.5 L1046.5 335 L1045.5 340" fill="none" stroke="#333" stroke-width="1"/>
<rect x="618.4" y="331" width="1.25" height="20.7" fill="#4a6cc0"/>
<rect x="618.4" y="367" width="1.25" height="29.6" fill="#4a6cc0"/>
<rect x="618.4" y="412.7" width="1.25" height="29.3" fill="#4a6cc0"/>
<rect x="618.4" y="457.7" width="1.25" height="29.3" fill="#4a6cc0"/>
<rect x="618.4" y="503" width="1.25" height="29.8" fill="#4a6cc0"/>
<rect x="618.4" y="548.6" width="1.25" height="19.4" fill="#4a6cc0"/>
<rect x="660.4" y="391.8" width="1.25" height="34.4" fill="#4a6cc0"/>
<rect x="660.4" y="442.8" width="1.25" height="29.6" fill="#4a6cc0"/>
<rect x="660.4" y="487.8" width="1.25" height="29.6" fill="#4a6cc0"/>
<rect x="660.4" y="532.8" width="1.25" height="35.2" fill="#4a6cc0"/>
<rect x="703.1" y="426" width="1.25" height="18.0" fill="#4a6cc0"/>
<rect x="703.1" y="460.5" width="1.25" height="29.5" fill="#4a6cc0"/>
<rect x="703.1" y="504" width="1.25" height="31.0" fill="#4a6cc0"/>
<rect x="703.1" y="550" width="1.25" height="18.0" fill="#4a6cc0"/>
<rect x="745.7" y="445" width="1.25" height="32.0" fill="#4a6cc0"/>
<rect x="745.7" y="493" width="1.25" height="30.0" fill="#4a6cc0"/>
<rect x="745.7" y="537.5" width="1.25" height="30.5" fill="#4a6cc0"/>
<rect x="787.9" y="457.7" width="1.25" height="25.3" fill="#4a6cc0"/>
<rect x="787.9" y="499" width="1.25" height="29.7" fill="#4a6cc0"/>
<rect x="787.9" y="543.4" width="1.25" height="24.6" fill="#4a6cc0"/>
<rect x="830.4" y="460.5" width="1.25" height="23.2" fill="#4a6cc0"/>
<rect x="830.4" y="500" width="1.25" height="29.7" fill="#4a6cc0"/>
<rect x="830.4" y="545" width="1.25" height="23.0" fill="#4a6cc0"/>
<rect x="872.4" y="455.6" width="1.25" height="26.7" fill="#4a6cc0"/>
<rect x="872.4" y="497" width="1.25" height="31.0" fill="#4a6cc0"/>
<rect x="872.4" y="543" width="1.25" height="25.0" fill="#4a6cc0"/>
<rect x="915.4" y="443" width="1.25" height="31.7" fill="#4a6cc0"/>
<rect x="915.4" y="491" width="1.25" height="30.0" fill="#4a6cc0"/>
<rect x="915.4" y="537" width="1.25" height="31.0" fill="#4a6cc0"/>
<rect x="957.9" y="418" width="1.25" height="22.5" fill="#4a6cc0"/>
<rect x="957.9" y="456.4" width="1.25" height="29.6" fill="#4a6cc0"/>
<rect x="957.9" y="502" width="1.25" height="30.0" fill="#4a6cc0"/>
<rect x="957.9" y="546.4" width="1.25" height="21.6" fill="#4a6cc0"/>
<rect x="999.9" y="384" width="1.25" height="17.5" fill="#4a6cc0"/>
<rect x="999.9" y="416.8" width="1.25" height="29.2" fill="#4a6cc0"/>
<rect x="999.9" y="462" width="1.25" height="30.0" fill="#4a6cc0"/>
<rect x="999.9" y="506.5" width="1.25" height="30.5" fill="#4a6cc0"/>
<rect x="999.9" y="552" width="1.25" height="16.0" fill="#4a6cc0"/>
<rect x="1042.8" y="330.4" width="1.25" height="20.1" fill="#4a6cc0"/>
<rect x="1042.8" y="367" width="1.25" height="29.7" fill="#4a6cc0"/>
<rect x="1042.8" y="411.6" width="1.25" height="29.4" fill="#4a6cc0"/>
<rect x="1042.8" y="457.4" width="1.25" height="30.0" fill="#4a6cc0"/>
<rect x="1042.8" y="502.7" width="1.25" height="30.0" fill="#4a6cc0"/>
<rect x="1042.8" y="547.7" width="1.25" height="20.3" fill="#4a6cc0"/>
<rect x="1084.6" y="338" width="1.25" height="12.5" fill="#4a6cc0"/>
<rect x="1084.6" y="367" width="1.25" height="29.7" fill="#4a6cc0"/>
<rect x="1084.6" y="411.6" width="1.25" height="29.4" fill="#4a6cc0"/>
<rect x="1084.6" y="457.4" width="1.25" height="30.0" fill="#4a6cc0"/>
<rect x="1084.6" y="502.7" width="1.25" height="30.0" fill="#4a6cc0"/>
<rect x="1084.6" y="547.7" width="1.25" height="12.3" fill="#4a6cc0"/>
<rect x="1085" y="560" width="1.2" height="8" fill="#333"/>
<rect x="565.4" y="560" width="30.0" height="1.1" fill="#333"/>
<rect x="610.8" y="560" width="30.0" height="1.1" fill="#333"/>
<rect x="656.2" y="560" width="30.0" height="1.1" fill="#333"/>
<rect x="701.7" y="560" width="30.0" height="1.1" fill="#333"/>
<rect x="747.1" y="560" width="30.0" height="1.1" fill="#333"/>
<rect x="792.5" y="560" width="30.0" height="1.1" fill="#333"/>
<rect x="837.9" y="560" width="30.0" height="1.1" fill="#333"/>
<rect x="883.3" y="560" width="30.0" height="1.1" fill="#333"/>
<rect x="928.8" y="560" width="30.0" height="1.1" fill="#333"/>
<rect x="974.2" y="560" width="30.0" height="1.1" fill="#333"/>
<rect x="1019.6" y="560" width="30.0" height="1.1" fill="#333"/>
<rect x="1065.0" y="560" width="20.6" height="1.1" fill="#333"/>
<rect x="554" y="560" width="12" height="1.1" fill="#333"/>
<circle cx="576.6" cy="565" r="1.7" fill="#111"/><circle cx="599" cy="565" r="1.7" fill="#111"/>
<rect x="598" y="569" width="13" height="1" fill="#4a6cc0"/>
<path d="M1078 449.5 H1093 M1089 446.5 L1093 449.5 L1089 452.5" fill="none" stroke="#4a6cc0" stroke-width="1.1"/>
<defs><filter id="noise" x="0" y="0" width="100%" height="100%"><feTurbulence type="fractalNoise" baseFrequency="0.07" numOctaves="4" seed="4" result="t"/><feColorMatrix type="matrix" values="0 0 0 0 0  0 0 0 0 0  0 0 0 0 0  0.9 0 0 0 -0.25"/></filter></defs>
<rect x="0" y="568" width="1140" height="46" fill="#84887a"/>
<rect x="0" y="568" width="1140" height="46" fill="#4a4e40" filter="url(#noise)" opacity="0.42"/>
<path d="M420.3 569 L531.6 569 L537.5 585 L420.3 585 Z" fill="#41443a"/>
<g stroke="#363a2e" stroke-width="3.4">
<line x1="177.4" y1="568.5" x2="211.7" y2="614"/>
<line x1="194" y1="579.6" x2="205.8" y2="568.5"/>
<line x1="213" y1="605.7" x2="250.8" y2="568.5"/>
<line x1="249.6" y1="614" x2="295.8" y2="568.5"/>
<line x1="297" y1="614" x2="341.5" y2="568.5"/>
<line x1="340.8" y1="614" x2="387" y2="568.5"/>
<line x1="384.7" y1="614" x2="430" y2="569"/>
<line x1="409.6" y1="614" x2="438" y2="585"/>
<line x1="455.8" y1="614" x2="484.2" y2="585"/>
<line x1="500.8" y1="614" x2="529.2" y2="585"/>
<line x1="526.9" y1="614" x2="561.2" y2="580.8"/>
<line x1="550.5" y1="614" x2="582.5" y2="580.8"/>
</g>
<rect x="0" y="568" width="1140" height="1.2" fill="#1a1a1a"/>
<rect x="0" y="613.5" width="1140" height="1.2" fill="#222"/>
<g stroke="#646464" fill="none">
<line x1="27" y1="791" x2="102.5" y2="897" stroke-width="4.2"/>
<line x1="50" y1="812" x2="70" y2="792" stroke-width="3.2"/>
<line x1="68" y1="839" x2="116" y2="792" stroke-width="3.4"/>
<line x1="87" y1="864" x2="160" y2="792" stroke-width="3.6"/>
<line x1="106" y1="891" x2="207" y2="792" stroke-width="5"/>
<line x1="129" y1="891" x2="230" y2="792" stroke-width="3.6"/>
<line x1="175" y1="891" x2="275" y2="792" stroke-width="3.6"/>
<line x1="220" y1="891" x2="320" y2="792" stroke-width="3.6"/>
<line x1="245" y1="892" x2="346" y2="792" stroke-width="3.4"/>
<line x1="255" y1="906" x2="369" y2="792" stroke-width="3.4"/>
</g>
<rect x="101" y="893.2" width="118.5" height="7" fill="#646464"/>
<line x1="93" y1="709" x2="99" y2="703" stroke="#b0b0b0" stroke-width="0.8"/>
</svg>
</body></html>
